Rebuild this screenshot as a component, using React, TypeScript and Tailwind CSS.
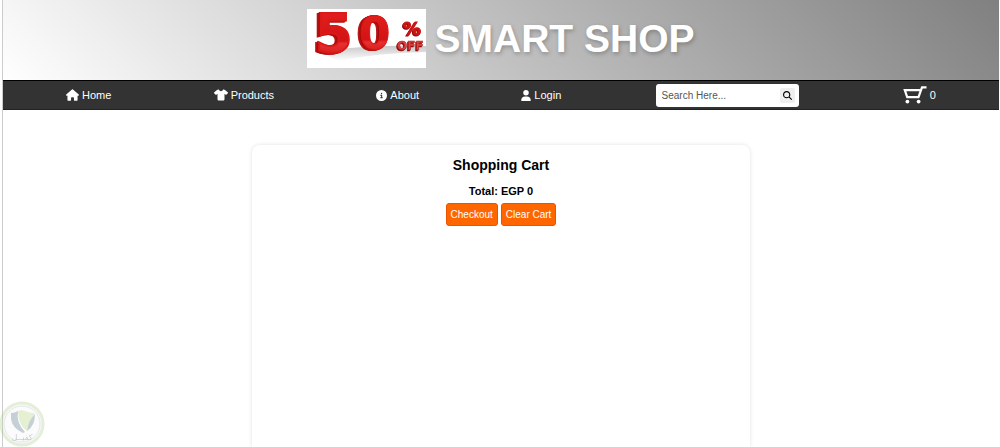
import {
  FaCircleInfo,
  FaHouse,
  FaMagnifyingGlass,
  FaShirt,
  FaUser,
} from "react-icons/fa6";

const links = [
  { label: "Home", href: "#home", Icon: FaHouse, size: "h-3 w-[13px]" },
  { label: "Products", href: "#products", Icon: FaShirt, size: "h-3 w-[14px]" },
  { label: "About", href: "#about", Icon: FaCircleInfo, size: "h-[11px] w-[11px]" },
  { label: "Login", href: "#login", Icon: FaUser, size: "h-[11px] w-[10px]" },
];

function SaleLogo() {
  return (
    <svg
      viewBox="0 0 119 59"
      className="h-[59px] w-[119px] shrink-0 overflow-visible bg-white font-['DejaVu_Sans'] font-bold"
    >
      <defs>
        <linearGradient id="red" x1="0" y1="0" x2="0" y2="1">
          <stop offset="0" stopColor="#e62222" />
          <stop offset="0.62" stopColor="#d31414" />
          <stop offset="0.66" stopColor="#e83030" />
          <stop offset="1" stopColor="#c30d0d" />
        </linearGradient>
        <linearGradient id="floor" x1="0" y1="0" x2="0" y2="1">
          <stop offset="0" stopColor="#c8c8c8" />
          <stop offset="1" stopColor="#ffffff" />
        </linearGradient>
      </defs>
      <path d="M14 42 Q60 36 119 37 L119 43 Q70 44 30 52 Z" fill="url(#floor)" />
      <g className="[filter:drop-shadow(-1px_0_0_#a00b0b)_drop-shadow(-2px_1px_0_#b80f0f)]">
        <text x="8" y="43" fontSize="54" fill="url(#red)" stroke="#dc1919" strokeWidth="2">
          5
        </text>
        <text x="52" y="40" fontSize="45" fill="url(#red)" stroke="#dc1919" strokeWidth="1">
          0
        </text>
      </g>
      <g className="[filter:drop-shadow(-1px_1px_0_#8d0808)]">
        <text x="96" y="26" fontSize="18" fill="#cf1515" stroke="#cf1515">
          %
        </text>
        <text x="90" y="41" fontSize="12" fill="#d94545" stroke="#b21c1c" strokeWidth="0.5">
          OFF
        </text>
      </g>
    </svg>
  );
}

function CartIcon() {
  return (
    <svg viewBox="0 0 24 18" className="h-[18px] w-6" fill="none" stroke="white">
      <path d="M23.5 1.4H19L15.5 11.2H4.2L1.8 4.2H17.5" strokeWidth="2.2" />
      <circle cx="4.4" cy="15.6" r="1.9" fill="white" stroke="none" />
      <circle cx="15.6" cy="15.6" r="1.9" fill="white" stroke="none" />
    </svg>
  );
}

function Navbar() {
  return (
    <nav className="flex h-[30px] items-center justify-between border-y border-t-black border-b-[#222] bg-[#333] px-[63px] text-[11px] text-white">
      {links.map(({ label, href, Icon, size }) => (
        <a key={label} href={href} className="flex items-center gap-[3px]">
          <Icon className={size} />
          {label}
        </a>
      ))}
      <form
        className="mr-[2px] -ml-2 flex h-[23px] w-[143px] items-center rounded-[3px] bg-white pr-1 pl-[6px]"
        onSubmit={(e) => e.preventDefault()}
      >
        <input
          type="text"
          aria-label="Search"
          placeholder="Search Here..."
          className="min-w-0 flex-1 text-[10px] text-[#333] outline-none placeholder:text-[#555]"
        />
        <button
          type="submit"
          aria-label="Search"
          className="flex h-[15px] w-[15px] items-center justify-center rounded-xs bg-[#efefef] text-black"
        >
          <FaMagnifyingGlass className="h-[9px] w-[9px]" />
        </button>
      </form>
      <a href="#cart" aria-label="Cart" className="flex items-center gap-[3px]">
        <CartIcon />
        <span>0</span>
      </a>
    </nav>
  );
}

function Watermark() {
  return (
    <svg
      viewBox="0 0 46 46"
      className="fixed bottom-0 left-0 h-[46px] w-[46px] opacity-30"
    >
      <circle cx="22" cy="23" r="21" fill="#e6ebee" stroke="#a8c878" strokeWidth="3" />
      <circle cx="22" cy="23" r="18" fill="#eef2ee" stroke="#9fb0bd" strokeWidth="1" />
      <path d="M11 12Q17 12 22 9Q28 12 34 12V18Q33 27 23 32Q12 27 11 18Z" fill="#ffffff" />
      <path d="M11 12Q15 12 18 10Q16 22 25 31L23 32Q12 27 11 18Z" fill="#3c6478" />
      <path d="M18 10L22 9Q29 12 34 12V14Q29 20 27 30Q18 24 18 10Z" fill="#a8cc6c" />
      <path d="M35 13Q35 25 27 30Q28 20 35 13Z" fill="#3c6478" />
      <text
        x="22"
        y="39"
        textAnchor="middle"
        fontSize="8"
        fill="#405060"
        className="font-['DejaVu_Sans']"
      >
        كفيــل
      </text>
    </svg>
  );
}

export default function App() {
  return (
    <div className="mr-px ml-[2px] flex min-h-screen flex-col border-l border-[#ccc] bg-white font-['Liberation_Sans',Arial,sans-serif] text-black">
      <header className="flex h-20 items-center justify-center gap-2 bg-[linear-gradient(45deg,#ffffff,#808080)] pb-1">
        <SaleLogo />
        <h1 className="text-[39px] leading-none font-bold text-white [text-shadow:1px_2px_4px_rgba(0,0,0,0.25)]">
          SMART SHOP
        </h1>
      </header>
      <Navbar />
      <main className="mx-auto mt-[35px] flex w-1/2 flex-1 flex-col items-center rounded-t-lg px-3 pt-3 shadow-[0_0_4px_rgba(0,0,0,0.12)]">
        <h2 className="text-[14px] leading-4 font-bold">Shopping Cart</h2>
        <p className="mt-3 text-[11px] leading-3 font-bold">Total: EGP 0</p>
        <div className="mt-[6px] flex gap-[3px] text-[10px] text-white">
          <button className="h-[23px] rounded-[3px] border border-[#e85500] bg-[#ff6600] px-1">
            Checkout
          </button>
          <button className="h-[23px] rounded-[3px] border border-[#e85500] bg-[#ff6600] px-1">
            Clear Cart
          </button>
        </div>
      </main>
      <Watermark />
    </div>
  );
}
